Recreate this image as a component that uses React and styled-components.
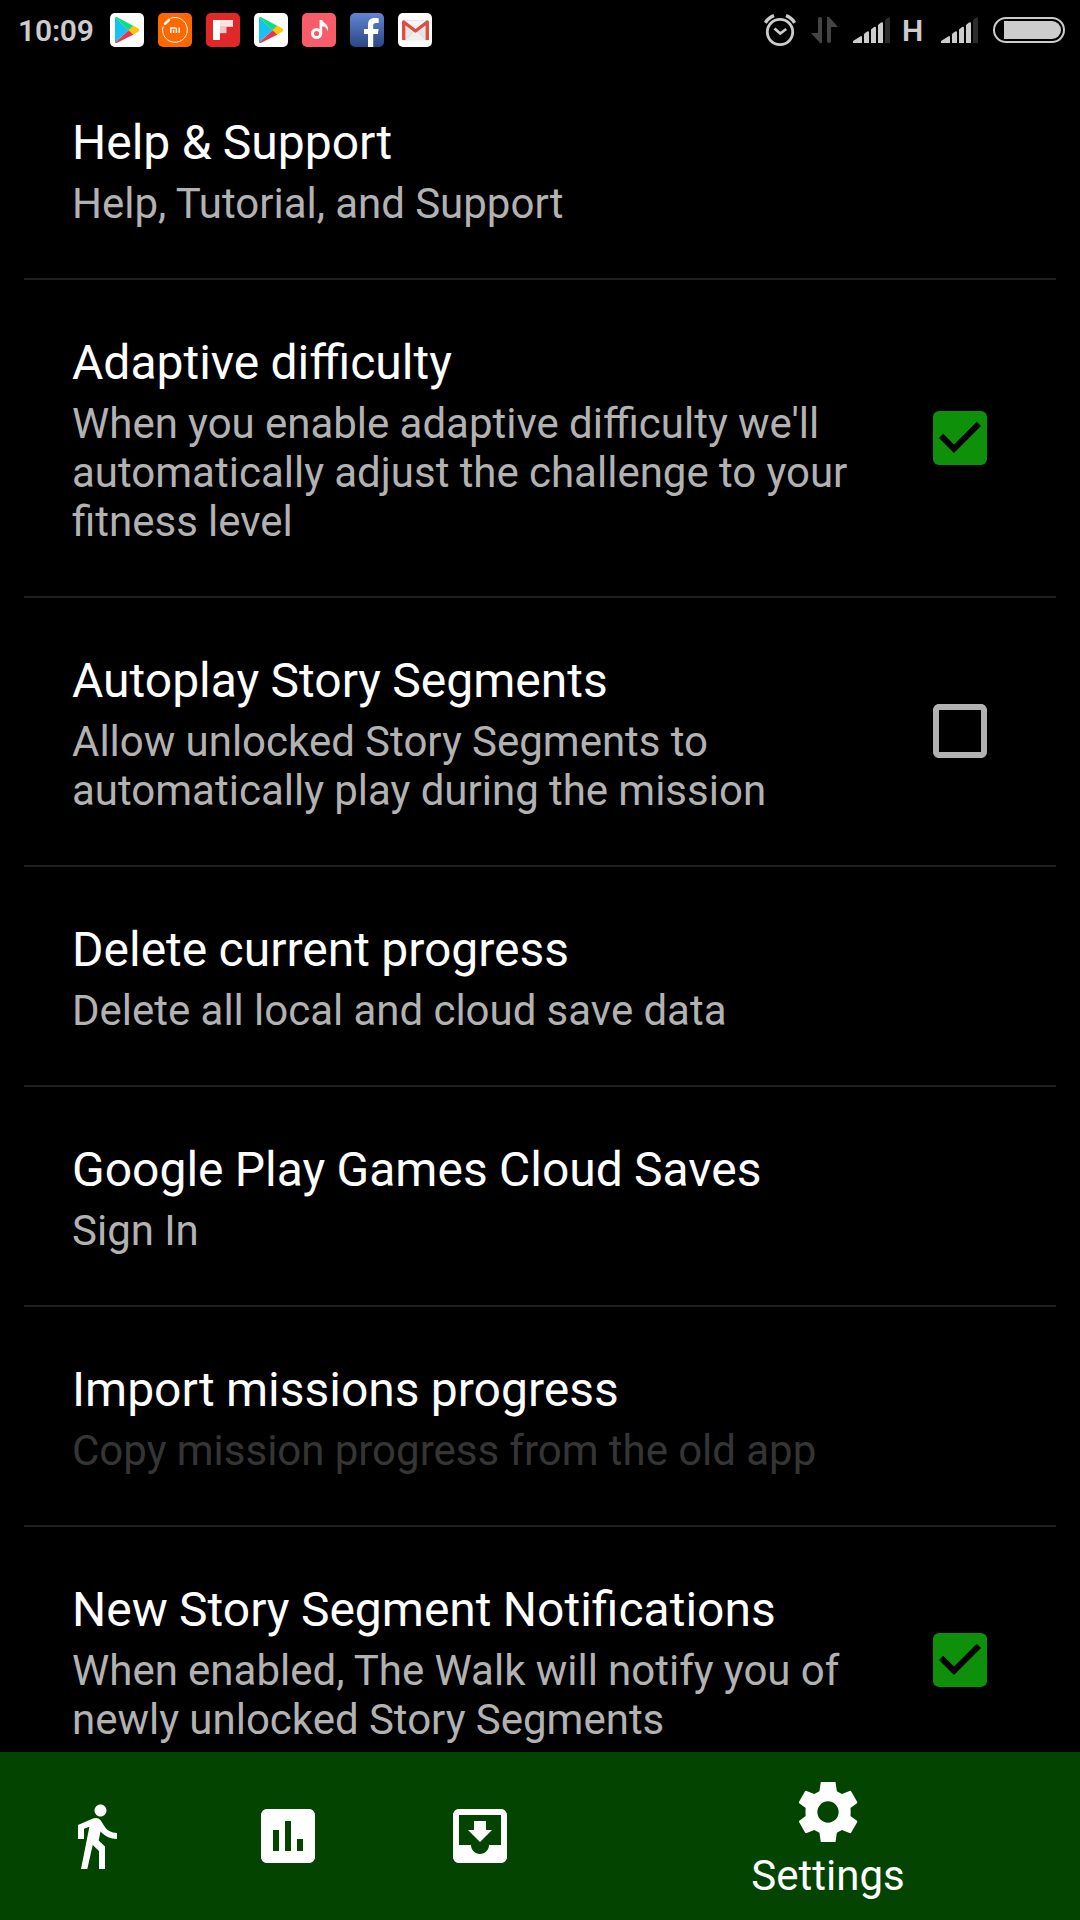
import styled, { createGlobalStyle } from 'styled-components'
import {
  MdCheckBox,
  MdCheckBoxOutlineBlank,
  MdDirectionsWalk,
  MdAssessment,
  MdMoveToInbox,
} from 'react-icons/md'

const settings = [
  { title: 'Help & Support', lines: ['Help, Tutorial, and Support'] },
  {
    title: 'Adaptive difficulty',
    lines: ["When you enable adaptive difficulty we'll", 'automatically adjust the challenge to your', 'fitness level'],
    checked: true,
  },
  {
    title: 'Autoplay Story Segments',
    lines: ['Allow unlocked Story Segments to', 'automatically play during the mission'],
    checked: false,
  },
  { title: 'Delete current progress', lines: ['Delete all local and cloud save data'] },
  { title: 'Google Play Games Cloud Saves', lines: ['Sign In'] },
  { title: 'Import missions progress', lines: ['Copy mission progress from the old app'], disabled: true },
  {
    title: 'New Story Segment Notifications',
    lines: ['When enabled, The Walk will notify you of', 'newly unlocked Story Segments'],
    checked: true,
  },
]

const PlayIcon = () => (
  <AppIcon viewBox="0 0 34 34">
    <rect width="34" height="34" rx="5" fill="#fff" />
    <path d="M5 4.3v25.4L18.5 17z" fill="#16c1f3" />
    <path d="M5 4.3q1-.8 2.2 0L23.6 13l-4.9 4.5z" fill="#0fe07a" />
    <path d="M5 29.7q1 .9 2.2 0L23.6 21.4l-4.9-4.4z" fill="#ee3350" />
    <path d="M23.4 12.8l5.2 3q1.4 1.3 0 2.6l-5.2 3-5-4.2z" fill="#fdc60b" />
  </AppIcon>
)

const MiIcon = () => (
  <AppIcon viewBox="0 0 34 34">
    <rect width="34" height="34" rx="5" fill="#ff6700" />
    <path d="M12.500 5.300A12.400 12.400 0 1 1 5 13.500" fill="none" stroke="#fff" strokeWidth="1" />
    <path d="M7 10.800l4-4" fill="none" stroke="#fff" strokeWidth="2.600" strokeLinecap="round" />
    <path d="M12.800 20v-5h4.600q1 0 1 1v4M15.600 16.800V20M21.200 14.500V20" fill="none" stroke="#fff" strokeWidth="1.400" />
  </AppIcon>
)

const FlipIcon = () => (
  <AppIcon viewBox="0 0 34 34">
    <rect width="34" height="34" rx="5" fill="#e12828" />
    <path d="M7 7h20v6.600H14V27H7z" fill="#fff" />
    <path d="M14 7h13v6.600H14z" fill="#fbe4e4" />
    <path d="M14 13.600h6.500v6.600H14z" fill="#f6c4c4" />
  </AppIcon>
)

const MusicIcon = () => (
  <AppIcon viewBox="0 0 34 34">
    <rect width="34" height="34" rx="5" fill="#f85c68" />
    <circle cx="14.600" cy="20.500" r="4.100" fill="none" stroke="#fff" strokeWidth="3" />
    <path d="M17.600 7h2.600c1 3 5.800 4 5.800 8.400 0 1.200-.4 2-.9 2.900.2-3.500-2.300-4.600-4.900-5V21h-2.600z" fill="#fff" />
  </AppIcon>
)

const FacebookIcon = () => (
  <AppIcon viewBox="0 0 34 34">
    <defs>
      <linearGradient id="fb" x1="0" y1="0" x2="0" y2="1">
        <stop offset="0" stopColor="#6285d3" />
        <stop offset="1" stopColor="#2b4683" />
      </linearGradient>
    </defs>
    <rect width="34" height="34" rx="5" fill="url(#fb)" />
    <path d="M18 34V21h-4v-5h4v-4c0-4.500 2.400-7 6.600-7 1.800 0 3 .1 4.100.3v4.600h-2.600c-2.300 0-2.900 1-2.900 2.700V16h5.400l-.7 5h-4.700v13z" fill="#fff" />
  </AppIcon>
)

const GmailIcon = () => (
  <AppIcon viewBox="0 0 34 34">
    <rect width="34" height="34" rx="5" fill="#fff" />
    <rect x="4" y="7" width="27" height="20.500" rx="1.500" fill="#e5e5e5" />
    <path d="M7 27l10.500-10L28 27" fill="#efefef" stroke="#d0d0d0" strokeWidth=".6" />
    <path d="M7 8h21L17.500 16z" fill="#f4f4f4" />
    <path d="M5.700 27V9l11.800 9L29.300 9v18" fill="none" stroke="#df4b3f" strokeWidth="3.300" strokeLinejoin="round" />
  </AppIcon>
)

const AlarmIcon = () => (
  <svg width="32" height="33" viewBox="0 0 32 33" fill="none" stroke="#ccc">
    <circle cx="16" cy="18" r="12.700" strokeWidth="2.800" />
    <path d="M10.500 14.500l5.700 5 6-4.500" strokeWidth="2.800" />
    <path d="M1.300 8.800Q4.500 3.600 10 1.700M30.700 8.800Q27.500 3.600 22 1.700" strokeWidth="3.400" />
  </svg>
)

const DataIcon = () => (
  <svg width="27" height="26" viewBox="0 0 27 26" fill="#444">
    <path d="M7 2q0-2 2-2t2 2v24H9L0 16h7z" />
    <path d="M16 0h2l9 10h-7v14q0 2-2 2t-2-2z" />
  </svg>
)

const SignalIcon = () => (
  <svg width="37" height="26" viewBox="0 0 37 26" fill="#ccc">
    <path d="M0 26v-2l8-5q1 0 1 1v6zM11 26v-9l3-2.500q2-.8 2 1V26zM18 26V12.500l3-2.500q2-.8 2 1V26zM25 26V8l3-2.500q2-.8 2 1V26z" />
    <path d="M32 26V3l3-2.500q2-.8 2 1V26z" fill="#2c2c2c" />
  </svg>
)

const BatteryIcon = () => (
  <svg width="72" height="26" viewBox="0 0 72 26">
    <rect x="1" y="1" width="70" height="24" rx="12" fill="none" stroke="#ccc" strokeWidth="2" />
    <path d="M11 4h48a9 9 0 0 1 0 18H11z" fill="#ccc" />
  </svg>
)

const GearIcon = () => (
  <svg width="72" height="72" viewBox="0 0 24 24" fill="#fff">
    <path
      fillRule="evenodd"
      d="M9.600 2h4.900l.45 3.050 1.700 .95 2.750-1.050.3.100 2.050 3.650v.3L19.500 10.700q.1 1.300 0 2.600l2.250 1.700v.3l-2.050 3.650-.3.100-2.750-1.050-1.700.95L14.500 22H9.600l-.45-3.050-1.700-.95-2.750 1.050-.3-.1-2.050-3.650v-.3l2.200-1.700q-.1-1.300 0-2.600L2.300 9v-.3l2.050-3.650.3-.1L7.400 6l1.750-.95zM12 8.450a3.550 3.550 0 1 0 0 7.100a3.550 3.550 0 1 0 0-7.100z"
    />
  </svg>
)

const App = () => {
  return (
    <Screen>
      <GlobalStyle />
      <StatusBar>
        <Clock>10:09</Clock>
        <Notifications>
          <PlayIcon />
          <MiIcon />
          <FlipIcon />
          <PlayIcon />
          <MusicIcon />
          <FacebookIcon />
          <GmailIcon />
        </Notifications>
        <SystemIcons>
          <AlarmIcon />
          <DataIcon />
          <SignalIcon />
          <Network>H</Network>
          <SignalIcon />
          <BatteryIcon />
        </SystemIcons>
      </StatusBar>
      <List>
        {settings.map((item) => (
          <Row key={item.title}>
            <RowText>
              <Title>{item.title}</Title>
              <Summary $disabled={item.disabled}>
                {item.lines.map((line) => (
                  <span key={line}>{line}</span>
                ))}
              </Summary>
            </RowText>
            {item.checked !== undefined && (
              <Check $checked={item.checked}>
                {item.checked ? <MdCheckBox /> : <MdCheckBoxOutlineBlank />}
              </Check>
            )}
          </Row>
        ))}
      </List>
      <NavBar>
        <Tab>
          <MdDirectionsWalk />
        </Tab>
        <Tab>
          <MdAssessment />
        </Tab>
        <Tab>
          <MdMoveToInbox />
        </Tab>
        <Tab $active>
          <GearIcon />
          <span>Settings</span>
        </Tab>
      </NavBar>
    </Screen>
  )
}

export default App

const GlobalStyle = createGlobalStyle`
  * {
      box-sizing: border-box;
  }
  body {
      margin: 0;
      background-color: #000;
      font-family: Roboto, sans-serif;
  }
  svg {
      display: block;
      flex-shrink: 0;
  }
`

const Screen = styled.div`
  width: 1080px;
  height: 1920px;
  display: flex;
  flex-direction: column;
  overflow: hidden;
  background-color: #000;
`

const StatusBar = styled.header`
  height: 60px;
  flex-shrink: 0;
  display: flex;
  align-items: center;
  padding: 0 15px 0 18px;
  color: #ccc;
`

const Clock = styled.span`
  width: 92px;
  font-size: 30px;
  font-weight: 600;
  line-height: 61px;
  letter-spacing: -0.2px;
`

const Notifications = styled.div`
  display: flex;
  gap: 14px;
`

const AppIcon = styled.svg`
  width: 34px;
  height: 34px;
`

const SystemIcons = styled.div`
  margin-left: auto;
  display: flex;
  align-items: center;
  gap: 15px;
`

const Network = styled.span`
  width: 24px;
  margin-left: -3px;
  font-size: 30px;
  font-weight: 600;
  line-height: 61px;
`

const List = styled.main`
  flex: 1;
  min-height: 0;
  overflow: hidden;
  padding: 0 24px;
`

const Row = styled.section`
  display: flex;
  align-items: center;
  justify-content: space-between;
  padding: 0 60px 0 48px;
  border-bottom: 2px solid #1f1f1f;
`

const RowText = styled.div`
  padding: 55px 0 50px;
  white-space: nowrap;
`

const Title = styled.h2`
  margin: 0 0 8px;
  font-size: 48px;
  font-weight: 400;
  line-height: 56px;
  word-spacing: -0.6px;
  color: #fff;
`

const Summary = styled.p`
  margin: 0;
  font-size: 42px;
  line-height: 49px;
  word-spacing: -0.2px;
  color: ${(props) => (props.$disabled ? '#353535' : '#b2b2b2')};
  & span {
      display: block;
  }
`

const Check = styled.div`
  margin-bottom: 1px;
  font-size: 72px;
  color: ${(props) => (props.$checked ? '#0f900a' : '#b2b2b2')};
`

const NavBar = styled.nav`
  height: 168px;
  flex-shrink: 0;
  display: flex;
  background-color: #034400;
`

const Tab = styled.div`
  width: ${(props) => (props.$active ? '504px' : '192px')};
  display: flex;
  flex-direction: column;
  align-items: center;
  justify-content: ${(props) => (props.$active ? 'flex-start' : 'center')};
  padding-top: ${(props) => (props.$active ? '24px' : '0')};
  font-size: 72px;
  color: #fff;
  & span {
      font-size: 42px;
      line-height: 49px;
      margin-top: 3px;
  }
`
